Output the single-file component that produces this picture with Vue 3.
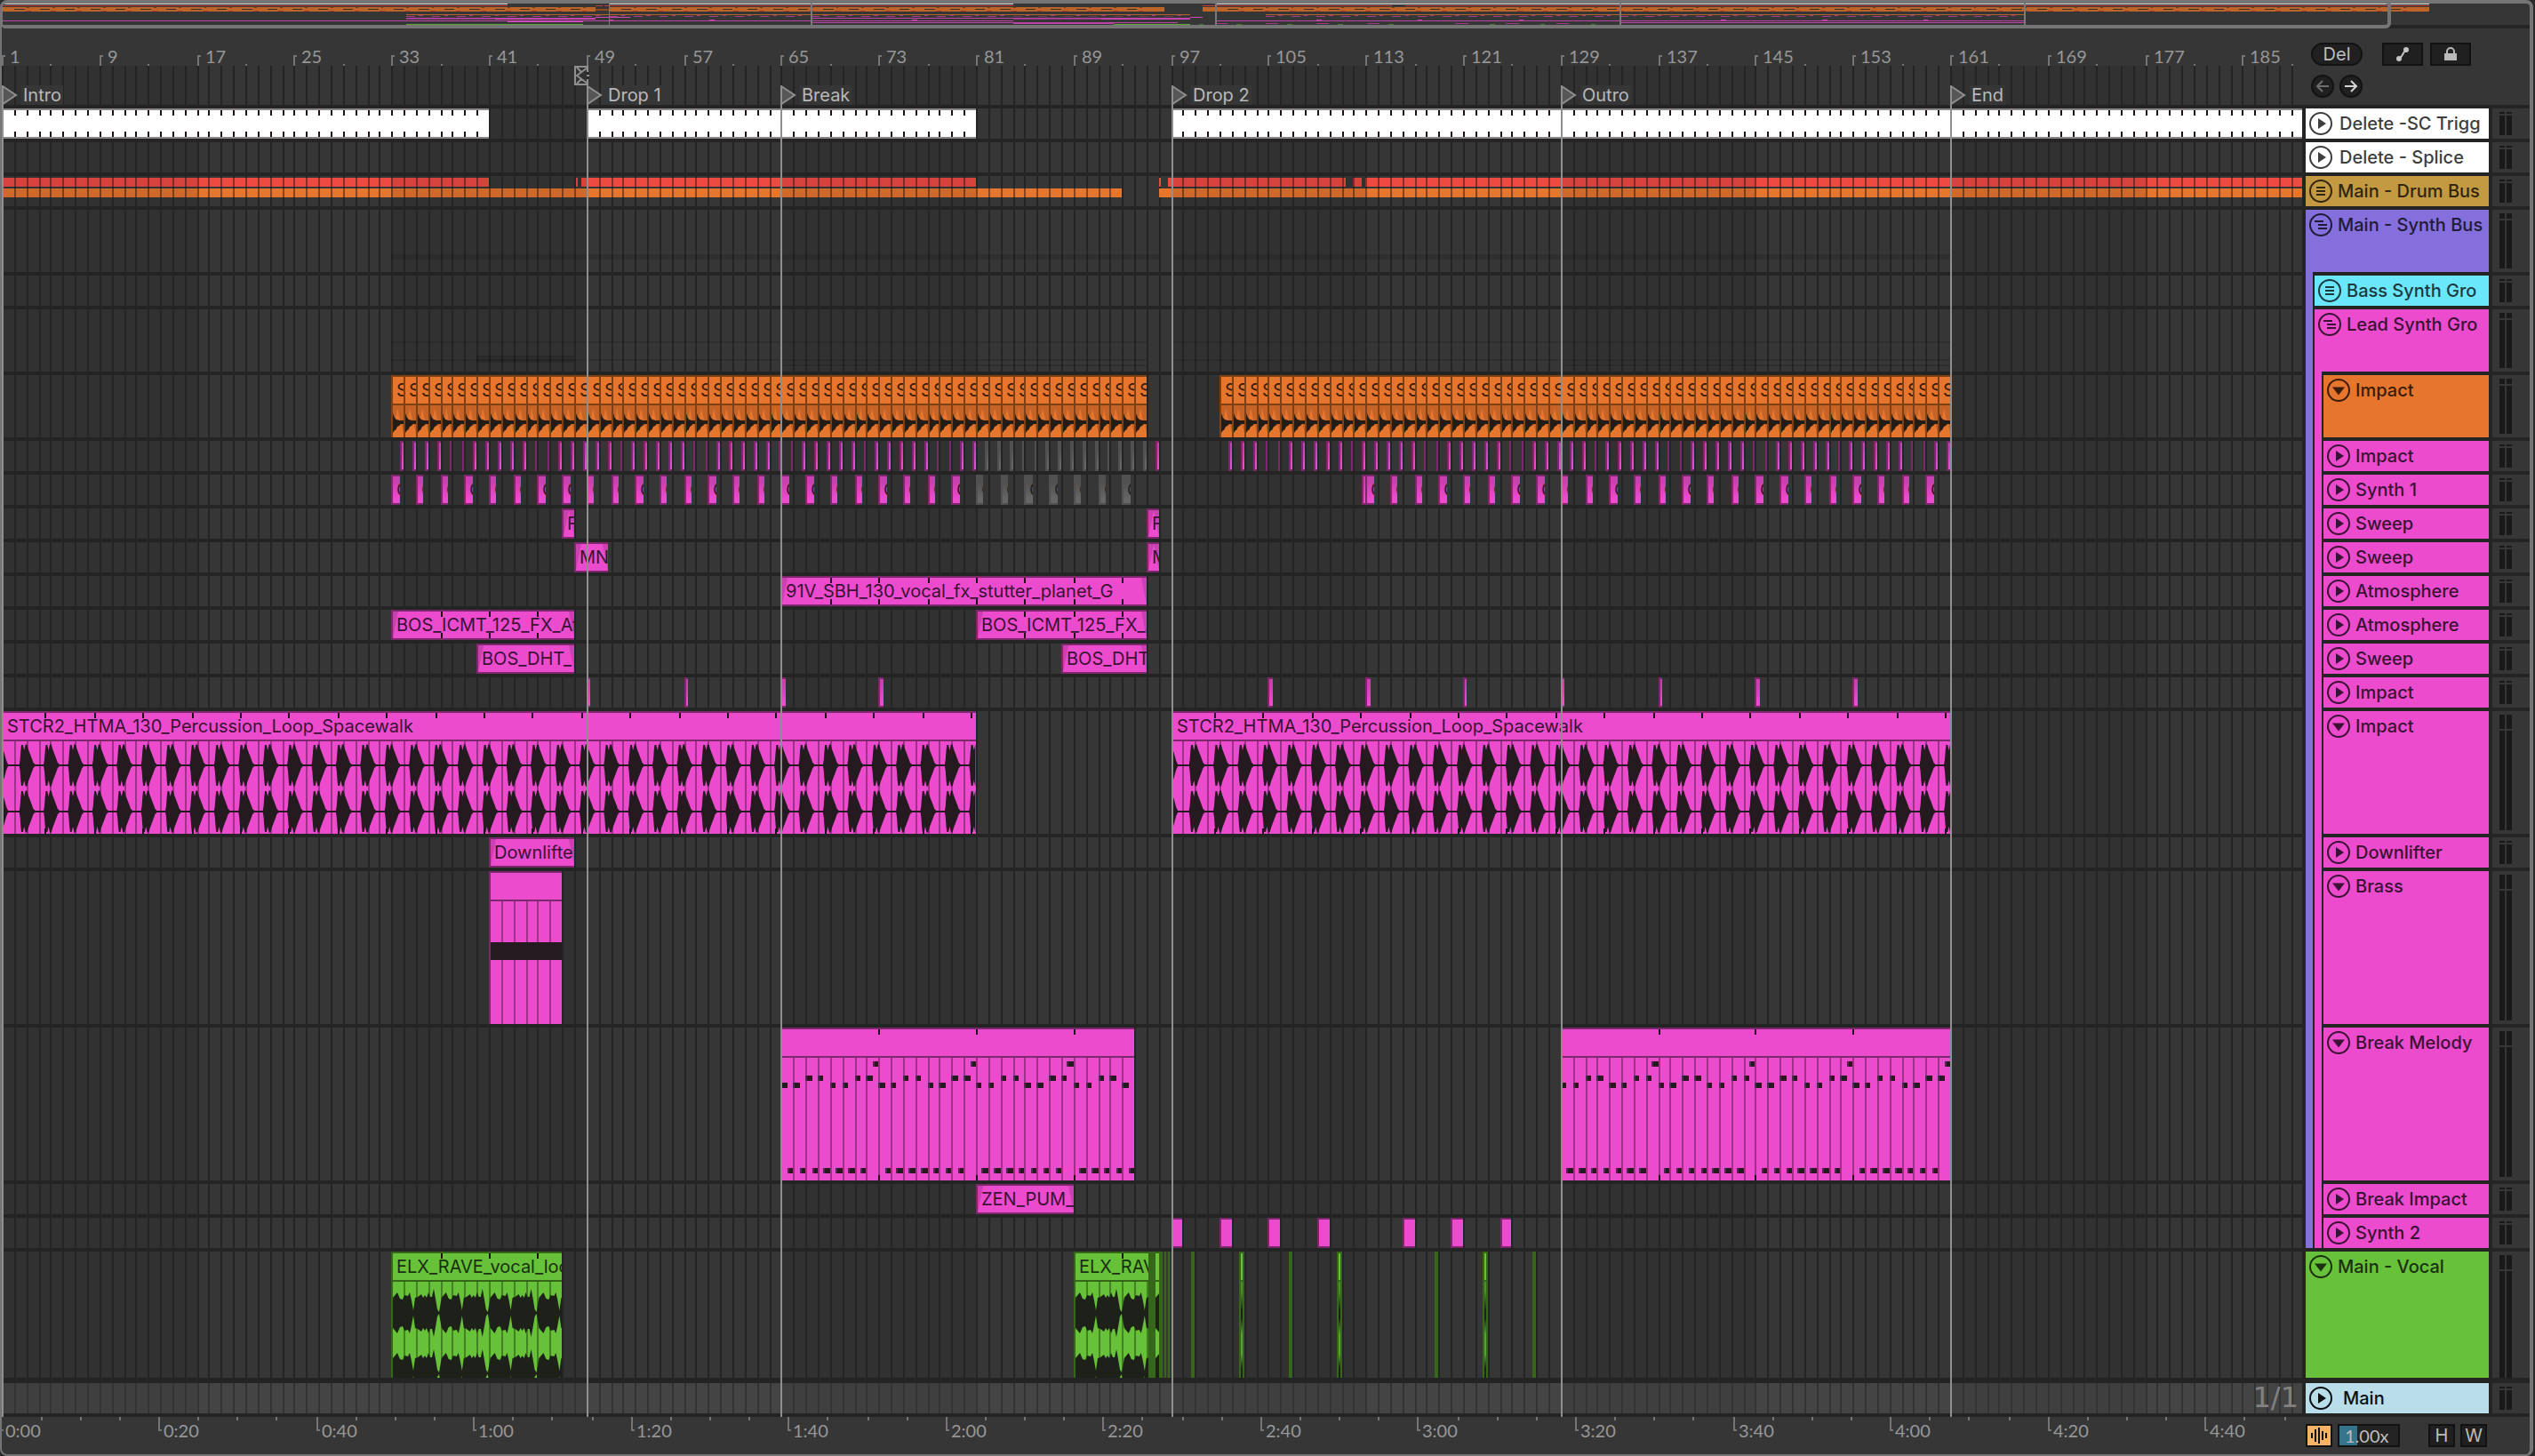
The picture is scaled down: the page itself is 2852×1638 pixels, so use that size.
<script setup>
const PINK = 'pink'
const range = (from, to, step = 1) => {
  const out = []
  for (let n = from; n <= to + 0.001; n += step) out.push(n)
  return out
}

// Every bar position snaps down to an even pixel.
const at = (bar) => `round(down, calc(1px + ${(bar - 1).toFixed(3)} * var(--bar)), 2px)`
const place = (a, b) => ({ left: at(a), width: `calc(${at(b)} - ${at(a)})` })
const inside = (a, bar) => ({ left: `calc(${at(bar)} - ${at(a)} - 2px)` })

const bars = range(1, 189)
const bands = range(1, 177, 32)
const rulerMarks = range(1, 185, 8)
const halfMarks = range(5, 189, 8)

const locators = [
  { bar: 1, name: 'Intro' },
  { bar: 49, name: 'Drop 1' },
  { bar: 65, name: 'Break' },
  { bar: 97, name: 'Drop 2' },
  { bar: 129, name: 'Outro' },
  { bar: 161, name: 'End' },
]

const secondToBar = (s) => 1 + s * 0.6464 - 0.08
const clock = (s) => `${Math.floor(s / 60)}:${String(s % 60).padStart(2, '0')}`
const times = range(0, 280, 20)
const minorTimes = range(5, 290, 5).filter((s) => s % 20)

const clip = (a, b, extra = {}) => ({ a, b, tone: PINK, name: '', ticks: [], ...extra })
const split = (a, b) => {
  const out = []
  let s = a
  while (s < b) {
    const next = Math.min(b, Math.floor((s - 1) / 16) * 16 + 17)
    out.push({ a: s, b: next, dim: Math.floor((s - 1) / 16) % 2 === 0 })
    s = next
  }
  return out
}
const strips = (list, tone) => list.flatMap(([a, b]) => split(a, b)).map((s) => ({ ...s, tone }))
const linesIn = (a, b) => range(Math.floor(a) + 1, Math.ceil(b) - 1)

const muted = (bar) => (bar >= 81 && bar < 95 ? 'grey' : PINK)
const melody = (a, b) => {
  const notes = []
  for (let n = a; n < b; n++) {
    const step = (n - a) % 8
    notes.push({ bar: n, row: [2, 3, 6, 7].includes(step) ? 'mid' : 'low' })
    notes.push({ bar: n + 0.5, row: step === 7 ? 'high' : 'bass' })
  }
  return notes
}

const lanes = [
  {
    id: 'sc', h: 34,
    clips: [[1, 41], [49, 81], [97, 190]].map(([a, b]) => clip(a, b, { tone: 'white', ticks: range(a + 1, b - 1), foot: true })),
  },
  { id: 'splice', h: 34, clips: [] },
  {
    id: 'drums', h: 34, clips: [],
    red: strips([[1, 41], [48.1, 48.3], [48.6, 81], [96.1, 96.25], [96.8, 111.4], [112, 112.7], [112.9, 190]], 'red'),
    orange: strips([[1, 93], [96.1, 190]], 'amber'),
  },
  { id: 'synthbus', h: 70, clips: [], faint: [[33, 96, 50, 6], [97, 161, 50, 6]] },
  { id: 'bass', h: 34, clips: [] },
  { id: 'lead', h: 70, clips: [], faint: [[33, 95, 36, 2], [97, 161, 36, 2], [33, 95, 56, 2], [40, 48, 52, 8], [97, 161, 56, 2], [65, 95, 62, 2], [129, 161, 62, 2]] },
  {
    id: 'kick', h: 70,
    clips: [...range(33, 94), ...range(101, 160)].map((n) => clip(n, n + 1, { tone: 'orange', name: 'S', kind: 'hit' })),
  },
  {
    id: 'impact', h: 34,
    clips: [...range(33, 95), ...range(101, 160)].map((n) => clip(n + 0.75, n + 1, { tone: muted(n), kind: 'sliver' })),
  },
  {
    id: 'synth1', h: 34,
    clips: [
      ...range(33, 93, 2).map((n) => clip(n, n + 0.65, { tone: muted(n), name: 'C', kind: 'sliver' })),
      clip(112.7, 113, { kind: 'sliver' }),
      ...range(113, 159, 2).map((n) => clip(n, n + 0.65, { name: 'C', kind: 'sliver' })),
    ],
  },
  { id: 'sweep1', h: 34, clips: [clip(47, 48, { name: 'FX', kind: 'fade' }), clip(95, 96, { name: 'FX', kind: 'fade' })] },
  { id: 'sweep2', h: 34, clips: [clip(48, 50.75, { name: 'MN', kind: 'fade' }), clip(95, 96, { name: 'MN', kind: 'fade' })] },
  { id: 'atmos1', h: 34, clips: [clip(65, 95, { name: '91V_SBH_130_vocal_fx_stutter_planet_G', kind: 'fade', ticks: range(69, 93, 4), foot: true })] },
  {
    id: 'atmos2', h: 34,
    clips: [
      clip(33, 48, { name: 'BOS_ICMT_125_FX_Atmos', kind: 'fade', ticks: [37, 41, 45], foot: true }),
      clip(81, 95, { name: 'BOS_ICMT_125_FX_Atmos', kind: 'fade', ticks: [85, 89, 93], foot: true }),
    ],
  },
  { id: 'sweep3', h: 34, clips: [clip(40, 48, { name: 'BOS_DHT_', kind: 'fade' }), clip(88, 95, { name: 'BOS_DHT_', kind: 'fade' })] },
  { id: 'impact2', h: 34, clips: [49, 57, 65, 73, 105, 113, 121, 129, 137, 145, 153].map((n) => clip(n, n + 0.35, { kind: 'sliver' })) },
  {
    id: 'loop', h: 138,
    clips: [[1, 81], [97, 161]].map(([a, b]) =>
      clip(a, b, { name: 'STCR2_HTMA_130_Percussion_Loop_Spacewalk', kind: 'loop', ticks: range(a + 3.56, b, 4), foot: true })),
  },
  { id: 'down', h: 34, clips: [clip(41, 48, { name: 'Downlifter', kind: 'fade' })] },
  { id: 'brass', h: 172, clips: [clip(41, 47, { kind: 'brass' })] },
  {
    id: 'melody', h: 172,
    clips: [[65, 94], [129, 161]].map(([a, b]) => clip(a, b, { kind: 'melody', ticks: range(a + 8, b - 1, 8), foot: true })),
  },
  { id: 'bimpact', h: 34, clips: [clip(81, 89, { name: 'ZEN_PUM_', kind: 'fade' })] },
  { id: 'synth2', h: 34, clips: [97, 101, 105, 109, 116, 120, 124].map((n) => clip(n, n + 1)) },
  {
    id: 'vocal', h: 142,
    clips: [
      clip(33, 47, { tone: 'green', name: 'ELX_RAVE_vocal_loop', kind: 'vocal', ticks: [37, 41, 45] }),
      clip(89, 95.16, { tone: 'green', name: 'ELX_RAVE_vocal_loop', kind: 'vocal', ticks: [93] }),
      clip(95.6, 96.04, { tone: 'green', kind: 'vocal' }),
      ...[[95.16, 95.6], [96.04, 96.33], [96.47, 96.62], [96.77, 96.91], [98.66, 98.95], [106.69, 106.98], [118.66, 118.96], [126.69, 126.99]]
        .map(([a, b]) => clip(a, b, { tone: 'green', kind: 'solid' })),
      ...[[102.6, 103.04], [110.64, 111.07], [122.61, 123.04]].map(([a, b]) => clip(a, b, { tone: 'green', kind: 'core' })),
    ],
  },
]
const tall = (c) => ['hit', 'loop', 'brass', 'melody', 'vocal', 'core'].includes(c.kind)

// Waveform outlines, drawn in units of a hundredth of a bar.
const mirror = (points, cx) => {
  const top = points.map(([x, y]) => `${x.toFixed(1)},${(cx - y).toFixed(1)}`)
  const low = [...points].reverse().map(([x, y]) => `${x.toFixed(1)},${(cx + y).toFixed(1)}`)
  return [...top, ...low].join(' ')
}
const loopShape = (c, cy) => {
  const blob = [[0, 1], [6, 6], [12, 17], [17, 23], [30, 23], [40, 17], [52, 24], [64, 23], [74, 18], [88, 13], [102, 8], [115, 3], [130, 1]]
  const pts = [[0, 22], [20, 14], [38, 5], [52, 1]]
  for (let n = 1.44; n < c.b - c.a; n += 2) blob.forEach(([x, y]) => pts.push([n * 100 + x, y]))
  return mirror(pts.filter(([x]) => x <= (c.b - c.a) * 100), cy)
}
const vocalShape = (c, cy) => {
  const cycle = [[2, 17], [7, 23], [10, 16], [13, 15], [15, 20], [19, 19], [21, 23], [23, 14], [25, 3], [27, 17], [30, 18], [34, 21], [36, 17], [38, 20], [40, 17], [42, 23], [44, 18], [46, 18], [48, 27], [50, 16], [52, 4], [54, 1]]
  const pts = [[0, 17]]
  for (let n = 0; n < (c.b - c.a) * 100; n += 400) cycle.forEach(([x, y]) => pts.push([n + x * 7.3, y]))
  return mirror(pts, cy)
}

const headers = {
  top: [
    { name: 'Delete -SC Trigg', tone: 'h-white', icon: 'play', h: 34 },
    { name: 'Delete - Splice', tone: 'h-white', icon: 'play', h: 34 },
    { name: 'Main - Drum Bus', tone: 'h-gold', icon: 'list', h: 34 },
  ],
  inner: [
    { name: 'Impact', tone: 'h-orange', icon: 'open', h: 70 },
    { name: 'Impact', tone: 'h-pink', icon: 'play', h: 34 },
    { name: 'Synth 1', tone: 'h-pink', icon: 'play', h: 34 },
    { name: 'Sweep', tone: 'h-pink', icon: 'play', h: 34 },
    { name: 'Sweep', tone: 'h-pink', icon: 'play', h: 34 },
    { name: 'Atmosphere', tone: 'h-pink', icon: 'play', h: 34 },
    { name: 'Atmosphere', tone: 'h-pink', icon: 'play', h: 34 },
    { name: 'Sweep', tone: 'h-pink', icon: 'play', h: 34 },
    { name: 'Impact', tone: 'h-pink', icon: 'play', h: 34 },
    { name: 'Impact', tone: 'h-pink', icon: 'open', h: 138 },
    { name: 'Downlifter', tone: 'h-pink', icon: 'play', h: 34 },
    { name: 'Brass', tone: 'h-pink', icon: 'open', h: 172 },
    { name: 'Break Melody', tone: 'h-pink', icon: 'open', h: 172 },
    { name: 'Break Impact', tone: 'h-pink', icon: 'play', h: 34 },
    { name: 'Synth 2', tone: 'h-pink', icon: 'play', h: 34 },
  ],
}
const glyphs = {
  play: 'M10 7v12l9-6z',
  open: 'M6 9.500h14l-7 9z',
  list: 'M8 8h10v2H8zM8 12h10v2H8zM8 16h10v2H8z',
  steps: 'M6 8h10v2H6zM10 12h10v2H10zM10 16h10v2H10z',
}
const peak = (h) => (h > 100 ? 16 : h > 50 ? 6 : 2)
const meterRows = [...lanes.map((l) => ({ h: l.h, id: l.id })), { h: 34, id: 'main' }]

// Song overview: [bar from, bar to, top, height, colour]
const rows = (list, y, h, c) => list.map(([a, b]) => [a, b, y, h, c])
const overview = [
  ...rows([[1, 41], [49, 81], [97, 193]], 0, 1, '#d8d8d8'),
  ...rows([[1, 41], [48, 48.5], [48.7, 81], [96, 111], [112, 193]], 2, 1, '#c23d36'),
  ...rows([[1, 48], [49, 93], [96, 193]], 4, 5, '#bd6429'),
  ...rows([[48, 49]], 6, 2, '#8f4a20'),
  ...range(2, 191, 2).filter((n) => n < 47 || (n > 49 && n < 92) || n > 97).flatMap((n) => [[n, n + 0.8, 6, 1, '#33302e'], [n + 1, n + 1.2, 4, 1, '#7d4018'], [n + 0.9, n + 1.3, 8, 1, '#b83a2c']]),
  ...rows([[33, 95], [101, 161]], 12, 1, '#b3602a'),
  ...[...range(33, 94, 2), ...range(101, 159, 2)].flatMap((n) => [[n, n + 0.7, 14, 1, n > 80 && n < 95 ? '#6a3a60' : '#a33c90'], [n + 1, n + 1.3, 13, 1, '#a33c90']]),
  ...rows([[33, 48], [65, 95], [81, 95]], 16, 1, '#bd43a8'),
  ...rows([[33, 48], [81, 95]], 17, 1, '#8b357c'),
  ...rows([[40, 48], [88, 95]], 17, 1, '#d146b8'),
  ...rows([[48, 50.7], [95, 96]], 15, 1, '#d146b8'),
  ...[49, 57, 73, 105, 113, 121, 137, 145, 153].map((n) => [n, n + 0.4, 18, 1, '#bd43a8']),
  ...rows([[1, 81], [97, 161]], 19, 1, '#bd43a8'),
  ...rows([[41, 47]], 19, 2, '#d146b8'),
  ...rows([[65, 94], [129, 161]], 21, 1, '#bd43a8'),
  ...rows([[81, 89]], 22, 1, '#bd43a8'),
  ...[97, 101, 105, 109, 116, 120, 124].map((n) => [n, n + 1, 22, 1, '#9a3a88']),
  ...rows([[33, 47], [89, 95]], 23, 1, '#5ea53a'),
  ...[95.7, 98.7, 102.7, 106.7, 110.7, 118.7, 122.7, 126.7].map((n) => [n, n + 0.4, 23, 1, '#447a2a']),
]
</script>

<template>
  <main class="frame">
    <section class="overview" aria-label="Overview">
      <svg class="overview-map" viewBox="0 0 19998 24" preserveAspectRatio="none" shape-rendering="crispEdges">
        <rect v-for="(r, i) in overview" :key="i" :x="(r[0] - 1) * 100" :y="r[2]" :width="(r[1] - r[0]) * 100" :height="r[3]" :fill="r[4]" />
        <rect v-for="l in locators" :key="l.bar" :x="(l.bar - 1) * 100" y="0" width="10" height="24" fill="#7a7a7a" />
      </svg>
      <div class="view-window"></div>
    </section>

    <div class="board">
      <section class="timeline" aria-label="Arrangement">
        <div class="ruler">
          <div v-for="n in rulerMarks" :key="n" class="mark" :style="{ left: at(n) }"><span>{{ n }}</span></div>
          <i v-for="n in halfMarks" :key="'h' + n" class="half" :style="{ left: at(n) }"></i>
        </div>

        <div class="canvas">
          <div class="grid">
            <i v-for="n in bands" :key="'b' + n" class="band" :style="place(n, n + 16)"></i>
            <i v-for="n in bars" :key="n" class="line" :style="{ left: at(n) }"></i>
          </div>

          <div class="locator-lane">
            <svg class="start-marker" :style="{ left: at(48) }" width="18" height="22" viewBox="0 0 18 22" fill="none" stroke="#8f8f8f" stroke-width="2">
              <path d="M15 7V1H1v20h14v-6M15 2L3 11l12 9M3 2l5 5M3 20l5-5M14 11h3" />
            </svg>
            <div v-for="l in locators" :key="l.bar" class="locator" :style="{ left: at(l.bar) }">
              <svg width="18" height="22" viewBox="0 0 18 22"><path d="M1 1l15 10L1 21z" fill="#565656" stroke="#8f8f8f" stroke-width="2" /></svg>
              <span>{{ l.name }}</span>
            </div>
          </div>

          <div v-for="lane in lanes" :key="lane.id" class="lane" :class="'lane-' + lane.id" :style="{ height: lane.h + 'px' }">
            <template v-if="lane.red">
              <div v-for="(row, r) in [lane.red, lane.orange]" :key="r" class="strip-row">
                <div v-for="(s, i) in row" :key="i" class="strip" :class="[s.tone, { dim: s.dim }]" :style="place(s.a, s.b)"></div>
                <i v-for="n in bars.filter((b) => row.some((s) => b > 1 && b >= s.a && b < s.b))" :key="'l' + n" class="seam" :style="{ left: at(n) }"></i>
              </div>
            </template>
            <i v-for="(f, i) in lane.faint || []" :key="'f' + i" class="faint" :style="{ ...place(f[0], f[1]), top: f[2] + 'px', height: f[3] + 'px' }"></i>

            <div v-for="(c, i) in lane.clips" :key="i" class="clip" :class="[c.tone, c.kind, { tall: tall(c) }]" :style="place(c.a, c.b)">
              <div class="clip-title"><span>{{ c.name }}</span></div>
              <div v-if="tall(c)" class="clip-body">
                <template v-if="c.kind !== 'hit' && c.kind !== 'core'">
                  <i v-for="n in linesIn(c.a, c.b)" :key="n" class="clip-line" :style="inside(c.a, n)"></i>
                </template>
                <svg v-if="c.kind === 'hit'" class="fit" viewBox="0 0 12 36" preserveAspectRatio="none">
                  <path d="M0 36V30L2 20 5 3 8 16 12 31V36z" fill="#e6752e" />
                  <path d="M0 9l2 5 2 2 4 1h4v4H9l-2 2-2 1-2 4-1 0-2 3z" fill="#241c16" />
                </svg>
                <svg v-if="c.kind === 'loop'" class="wave" :style="{ width: `calc(${c.b - c.a} * var(--bar))` }" :viewBox="`0 0 ${(c.b - c.a) * 100} 104`" preserveAspectRatio="none">
                  <polygon :points="loopShape(c, 27)" fill="#241a20" />
                  <polygon :points="loopShape(c, 79)" fill="#241a20" />
                </svg>
                <svg v-if="c.kind === 'vocal'" class="wave" :style="{ width: `calc(${c.b - c.a} * var(--bar))` }" :viewBox="`0 0 ${(c.b - c.a) * 100} 108`" preserveAspectRatio="none">
                  <polygon :points="vocalShape(c, 35)" fill="#1d2119" />
                  <polygon :points="vocalShape(c, 103)" fill="#1d2119" />
                </svg>
                <div v-if="c.kind === 'brass'" class="brass-note"></div>
                <template v-if="c.kind === 'melody'">
                  <i v-for="note in melody(c.a, c.b)" :key="note.bar" class="note" :class="note.row" :style="{ left: `calc(${at(note.bar)} - ${at(c.a)} - 2px)`, width: `calc(${at(note.bar + 0.5)} - ${at(note.bar)})` }"></i>
                </template>
              </div>
              <template v-for="t in c.ticks" :key="t">
                <i class="tick" :style="inside(c.a, t)"></i>
                <i v-if="c.foot" class="tick foot" :style="inside(c.a, t)"></i>
              </template>
            </div>
          </div>

          <div class="lane lane-main"><output>1/1</output></div>
          <i v-for="l in locators" :key="'v' + l.bar" class="locator-line" :style="{ left: at(l.bar) }"></i>
        </div>

        <div class="times">
          <div v-for="s in times" :key="s" class="time" :style="{ left: at(secondToBar(s)) }"><span>{{ clock(s) }}</span></div>
          <i v-for="s in minorTimes" :key="'m' + s" class="minor" :style="{ left: at(secondToBar(s)) }"></i>
        </div>
      </section>

      <aside class="side">
        <div class="tools">
          <div class="tool-row">
            <button class="pill">Del</button>
            <button class="square first" aria-label="Automation mode">
              <svg width="20" height="18" viewBox="0 0 20 18"><path d="M5 14C10 14 10 5 15 4" fill="none" stroke="#c4c4c4" stroke-width="2" /><circle cx="6" cy="14" r="3" fill="#c4c4c4" /><circle cx="14" cy="4" r="3" fill="#c4c4c4" /></svg>
            </button>
            <button class="square" aria-label="Lock envelopes">
              <svg width="16" height="16" viewBox="0 0 16 16"><path d="M4 8V5a4 4 0 0 1 8 0v3" fill="none" stroke="#b9b9b9" stroke-width="2" /><path d="M1 7h14v8H1z" fill="#b9b9b9" /></svg>
            </button>
          </div>
          <div class="tool-row">
            <button class="round" aria-label="Previous locator">
              <svg width="16" height="14" viewBox="0 0 16 14" fill="none" stroke="#6f6f6f" stroke-width="2"><path d="M15 7H2M8 1L2 7l6 6" /></svg>
            </button>
            <button class="round" aria-label="Next locator">
              <svg width="16" height="14" viewBox="0 0 16 14" fill="none" stroke="#d5d5d5" stroke-width="2"><path d="M1 7h13M8 1l6 6-6 6" /></svg>
            </button>
          </div>
        </div>

        <div class="tracks">
          <div class="heads">
            <div v-for="(t, i) in headers.top" :key="i" class="head" :class="t.tone" :style="{ height: t.h + 'px' }">
              <button class="fold" :aria-label="'Fold ' + t.name"><svg width="26" height="26" viewBox="0 0 26 26"><circle cx="13" cy="13" r="12" /><path :d="glyphs[t.icon]" /></svg></button>
              <span>{{ t.name }}</span>
            </div>
            <div class="group h-violet">
              <div class="head h-violet group-head">
                <button class="fold" aria-label="Fold Main - Synth Bus"><svg width="26" height="26" viewBox="0 0 26 26"><circle cx="13" cy="13" r="12" /><path :d="glyphs.steps" /></svg></button>
                <span>Main - Synth Bus</span>
              </div>
              <div class="children">
                <div class="head h-cyan">
                  <button class="fold" aria-label="Fold Bass Synth Group"><svg width="26" height="26" viewBox="0 0 26 26"><circle cx="13" cy="13" r="12" /><path :d="glyphs.list" /></svg></button>
                  <span>Bass Synth Gro</span>
                </div>
                <div class="group h-pink">
                  <div class="head h-pink group-head">
                    <button class="fold" aria-label="Fold Lead Synth Group"><svg width="26" height="26" viewBox="0 0 26 26"><circle cx="13" cy="13" r="12" /><path :d="glyphs.steps" /></svg></button>
                    <span>Lead Synth Gro</span>
                  </div>
                  <div class="children">
                    <div v-for="(t, i) in headers.inner" :key="i" class="head" :class="t.tone" :style="{ height: t.h + 'px' }">
                      <button class="fold" :aria-label="'Fold ' + t.name"><svg width="26" height="26" viewBox="0 0 26 26"><circle cx="13" cy="13" r="12" /><path :d="glyphs[t.icon]" /></svg></button>
                      <span>{{ t.name }}</span>
                    </div>
                  </div>
                </div>
              </div>
            </div>
            <div class="head h-green vocal-head">
              <button class="fold" aria-label="Fold Main - Vocal"><svg width="26" height="26" viewBox="0 0 26 26"><circle cx="13" cy="13" r="12" /><path :d="glyphs.open" /></svg></button>
              <span>Main - Vocal</span>
            </div>
            <div class="head h-ice main-head">
              <button class="fold" aria-label="Fold Main"><svg width="26" height="26" viewBox="0 0 26 26"><circle cx="13" cy="13" r="12" /><path :d="glyphs.play" /></svg></button>
              <span>Main</span>
            </div>
          </div>
          <div class="meters">
            <div v-for="m in meterRows" :key="m.id" class="meter-row" :class="'meter-' + m.id" :style="{ height: m.h + 'px' }">
              <div v-for="k in 2" :key="k" class="meter"><i :style="{ height: peak(m.h) + 'px' }"></i><b></b></div>
            </div>
          </div>
        </div>

        <div class="controls">
          <button class="follow" aria-label="Show waveforms">
            <svg width="18" height="18" viewBox="0 0 18 18" stroke="#111" stroke-width="2"><path d="M1 6v6M5 2v14M9 0v18M13 4v10M17 6v6" /></svg>
          </button>
          <input class="speed" type="text" value="1.00x" aria-label="Zoom factor" />
          <button class="letter h">H</button>
          <button class="letter">W</button>
        </div>
      </aside>
    </div>
  </main>
</template>

<style>
body {
  margin: 0;
  background: #2a2a2a;
}
</style>

<style scoped>
* {
  box-sizing: border-box;
}
.frame {
  --ink: #242424;
  --panel: #363636;
  margin-right: 2px;
  border: 4px solid #757575;
  border-left-width: 2px;
  border-bottom-width: 2px;
  border-radius: 8px;
  background: var(--panel);
  font-family: Inter, "Liberation Sans", sans-serif;
  font-size: 20px;
  line-height: 24px;
  color: #979797;
  overflow: hidden;
}
button,
input {
  font: inherit;
  margin: 0;
  padding: 0;
  border-radius: 0;
}
svg {
  display: block;
  flex: none;
}

/* overview */
.overview {
  position: relative;
  height: 28px;
  border-bottom: 4px solid var(--ink);
}
.overview-map {
  width: 100%;
  height: 24px;
}
.view-window {
  position: absolute;
  left: -2px;
  top: -4px;
  width: 94.6%;
  height: 32px;
  border: 4px solid #757575;
  border-left-width: 2px;
  border-radius: 6px;
}

.board {
  display: flex;
}
.timeline {
  --bar: calc(100cqw / 188.905);
  flex: 1;
  min-width: 0;
  container-type: inline-size;
  overflow: hidden;
}

/* bar ruler */
.ruler {
  position: relative;
  height: 42px;
}
.mark {
  position: absolute;
  top: 30px;
  width: 4px;
  height: 12px;
  border: solid #757575;
  border-width: 2px 0 0 2px;
}
.mark span,
.time span,
.speed {
  font-family: Lato, "Liberation Sans", sans-serif;
}
.mark span {
  position: absolute;
  left: 7px;
  top: -13px;
}
.half {
  position: absolute;
  bottom: 0;
  width: 2px;
  height: 2px;
  background: #757575;
}

/* canvas */
.canvas {
  position: relative;
  border-bottom: 4px solid var(--ink);
}
.grid {
  position: absolute;
  inset: 0;
}
.band,
.line {
  position: absolute;
  top: 0;
  bottom: 0;
}
.band {
  background: #313131;
}
.line {
  width: 2px;
  background: var(--ink);
}
.locator-lane {
  position: relative;
  height: 48px;
  border-bottom: 4px solid var(--ink);
}
.start-marker {
  position: absolute;
  top: 0;
}
.locator {
  position: absolute;
  top: 22px;
  z-index: 3;
  display: flex;
  gap: 4px;
  height: 22px;
}
.locator span {
  padding: 0 2px;
  line-height: 22px;
  color: #b9b9b9;
  background: var(--panel);
}
.locator-line {
  position: absolute;
  top: 24px;
  bottom: -4px;
  z-index: 2;
  width: 2px;
  background: #8f8f8f;
}
.lane {
  position: relative;
  box-sizing: content-box;
  border-bottom: 4px solid var(--ink);
  overflow: hidden;
}
.lane-vocal {
  border-bottom-width: 6px;
}
.lane-main {
  height: 34px;
  border-bottom: 0;
  background: rgba(255, 255, 255, 0.07);
}
.lane-main output {
  display: block;
  padding-right: 4px;
  text-align: right;
  font-family: "DejaVu Sans", sans-serif;
  font-size: 32px;
  line-height: 32px;
  color: #818181;
}
.faint {
  position: absolute;
  background: rgba(0, 0, 0, 0.12);
}

/* drum overview strips */
.strip-row {
  position: relative;
  height: 10px;
  margin-top: 2px;
}
.strip,
.seam {
  position: absolute;
  top: 0;
  height: 10px;
}
.seam {
  width: 2px;
  background: rgba(36, 20, 16, 0.5);
}
.red {
  background: #ed4a42;
}
.red.dim {
  background: #d5433c;
}
.amber {
  background: #e6752e;
}
.amber.dim {
  background: #cf6929;
}

/* clips */
.clip {
  --fill: #ec4bce;
  --shade: #c841ae;
  --edge: #7d286d;
  --text: #3a1233;
  position: absolute;
  top: 0;
  bottom: 0;
  border: solid var(--edge);
  border-width: 2px 0 2px 2px;
  background: var(--fill);
  color: var(--text);
  overflow: hidden;
}
.clip.white {
  --fill: #fff;
  --edge: #8d8888;
  border-left-color: #fff;
}
.clip.orange {
  --fill: #e6752e;
  --shade: #c56426;
  --edge: #7f4014;
  --text: #3a1d09;
}
.clip.green {
  --fill: #67c23a;
  --shade: #57a331;
  --edge: #35661a;
  --text: #1a300e;
}
.clip.grey {
  --fill: #666;
  --shade: #505050;
  --edge: #505050;
  --text: #222;
}
.clip-title {
  height: 30px;
  padding-left: 4px;
  line-height: 31px;
  white-space: nowrap;
}
.tall {
  border-bottom: 0;
}
.tall .clip-title {
  height: 32px;
  border-bottom: 2px solid var(--edge);
}
.fade::before,
.fade::after {
  content: "";
  position: absolute;
  top: 0;
  bottom: 0;
  width: 6px;
  background: var(--shade);
}
.fade::before {
  left: 0;
  clip-path: polygon(0 0, 100% 0, 0 100%);
}
.fade::after {
  right: 0;
  clip-path: polygon(0 0, 100% 100%, 100% 0);
}
.fade .clip-title {
  position: relative;
  z-index: 1;
}
.sliver {
  background: linear-gradient(var(--shade) 20%, var(--fill) 85%);
}
.solid {
  background: var(--edge);
}
.core {
  border-right: 2px solid var(--edge);
}
.core .clip-body {
  background: linear-gradient(#4d8f2b 10%, #1d2119 30%, #1d2119 38%, #57a331 55%, #57a331 75%, #1d2119 90%);
}
.clip-body {
  position: absolute;
  inset: 32px 0 0;
}
.hit .clip-body {
  background: var(--shade);
}
.fit {
  width: 100%;
  height: 100%;
}
.wave {
  position: absolute;
  left: -2px;
  top: 0;
  height: 100%;
}
.clip-line {
  position: absolute;
  top: 0;
  bottom: 0;
  width: 2px;
  background: var(--edge);
  opacity: 0.7;
}
.tick {
  position: absolute;
  top: 0;
  width: 2px;
  height: 6px;
  background: #1c1218;
}
.tick.foot {
  top: auto;
  bottom: 0;
}
.brass-note {
  position: absolute;
  top: 46px;
  left: 0;
  right: 0;
  height: 20px;
  background: #241a20;
}
.note {
  position: absolute;
  height: 6px;
  border-left: 2px solid #5c2251;
  background: #241a20;
}
.high {
  top: 4px;
}
.mid {
  top: 20px;
}
.low {
  top: 28px;
}
.bass {
  top: 124px;
}

/* time ruler */
.times {
  position: relative;
  height: 42px;
}
.time {
  position: absolute;
  top: 0;
  width: 4px;
  height: 16px;
  border: solid #757575;
  border-width: 0 0 2px 2px;
}
.time span {
  position: absolute;
  left: 4px;
  top: 3px;
}
.minor {
  position: absolute;
  top: 0;
  width: 2px;
  height: 4px;
  background: #757575;
}

/* right side */
.side {
  flex: none;
  width: 256px;
}
.tools {
  display: flex;
  flex-direction: column;
  gap: 10px;
  height: 86px;
  padding: 16px 10px 0;
}
.tool-row {
  display: flex;
  gap: 6px;
}
.pill,
.square,
.round,
.letter {
  display: flex;
  align-items: center;
  justify-content: center;
  height: 26px;
  border: 2px solid #121212;
  background: #202020;
  color: #bdbdbd;
}
.pill {
  width: 58px;
  border-radius: 13px;
  line-height: 22px;
}
.square {
  width: 46px;
  margin-left: 2px;
}
.square.first {
  margin-left: 16px;
}
.round {
  width: 26px;
  border-radius: 13px;
}
.tracks {
  display: flex;
  gap: 4px;
  padding: 4px 0 4px 4px;
  background: var(--ink);
}
.heads {
  display: flex;
  flex-direction: column;
  gap: 4px;
  width: 206px;
}
.head {
  display: flex;
  align-items: flex-start;
  gap: 6px;
  height: 34px;
  padding: 4px;
  font-weight: 500;
  line-height: 26px;
  white-space: nowrap;
  overflow: hidden;
}
.head.h-white {
  gap: 8px;
}
.group-head {
  height: 70px;
}
.children {
  display: flex;
  flex-direction: column;
  gap: 4px;
  margin-left: 8px;
  padding: 4px 0 0 2px;
  background: var(--ink);
}
.vocal-head {
  height: 142px;
}
.main-head {
  gap: 12px;
  margin-top: 2px;
}
.fold {
  flex: none;
  width: 26px;
  height: 26px;
  border: 0;
  background: none;
  color: inherit;
}
.fold circle {
  fill: none;
  stroke: currentColor;
  stroke-width: 2;
}
.fold path {
  fill: currentColor;
}
.h-white {
  background: #fff;
  color: #3e3e3e;
}
.h-gold {
  background: #c39a41;
  color: #31260f;
}
.h-violet {
  background: #846fdc;
  color: #211b38;
}
.h-cyan {
  background: #6be7fc;
  color: #1a3a3f;
}
.h-pink {
  background: #ec4bce;
  color: #3a1233;
}
.h-orange {
  background: #e6752e;
  color: #3a1d09;
}
.h-green {
  background: #67c23a;
  color: #1a300e;
}
.h-ice {
  background: #b9dde9;
  color: #0c0f10;
}
.meters {
  display: flex;
  flex-direction: column;
  gap: 4px;
  flex: 1;
}
.meter-row {
  display: flex;
  gap: 2px;
  padding: 4px 8px;
  background: var(--panel);
}
.meter-vocal {
  padding-bottom: 0;
}
.meter-main {
  margin-top: 2px;
}
.meter {
  display: flex;
  flex-direction: column;
  gap: 2px;
  width: 6px;
}
.meter i,
.meter b {
  background: #191919;
}
.meter b {
  flex: 1;
}
.controls {
  display: flex;
  height: 42px;
  padding: 8px 4px;
}
.follow {
  display: flex;
  align-items: center;
  justify-content: center;
  width: 30px;
  height: 26px;
  border: 2px solid #121212;
  background: #f6b266;
}
.speed {
  width: 70px;
  height: 26px;
  margin: 0 32px 0 6px;
  padding-left: 6px;
  border: 2px solid #121212;
  background: linear-gradient(90deg, #35748a 20px, #232323 20px);
  color: #bdbdbd;
}
.letter {
  width: 30px;
}
.letter.h {
  margin-right: 6px;
}
</style>
